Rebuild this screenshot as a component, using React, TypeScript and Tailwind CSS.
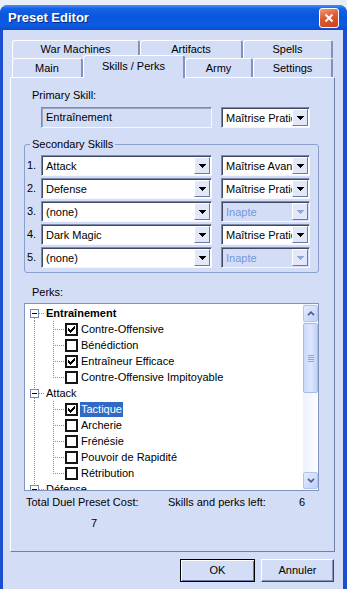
import clsx from 'clsx'

const CHECK = ['......X', '.....XX', 'X...XXX', 'XX.XXX.', 'XXXXX..', '.XXX...', '..X....']

const Arrow = ({ color }: { color: string }) => (
  <svg width="7" height="4" viewBox="0 0 7 4" shapeRendering="crispEdges">
    <rect x="0" y="0" width="7" height="1" fill={color} />
    <rect x="1" y="1" width="5" height="1" fill={color} />
    <rect x="2" y="2" width="3" height="1" fill={color} />
    <rect x="3" y="3" width="1" height="1" fill={color} />
  </svg>
)

const Combo = ({ value, width, disabled }: { value: string; width: string; disabled?: boolean }) => (
  <div
    className={clsx(
      'flex h-[21px] border border-t-[#7d8aac] border-l-[#7d8aac] border-r-[#f6f8ff] border-b-[#f6f8ff] shadow-[inset_1px_1px_0_#3f4966]',
      width,
      disabled ? 'bg-[#d4ddf6] text-[#7596dc]' : 'bg-white text-black'
    )}
  >
    <span className="min-w-0 flex-1 overflow-hidden whitespace-nowrap pl-[4px] pt-[1px] leading-[18px]">{value}</span>
    <div className="my-[1px] mr-[1px] flex w-[16px] items-center justify-center border border-t-white border-l-white border-r-[#6b79a0] border-b-[#6b79a0] bg-[#e2e8f8]">
      <Arrow color={disabled ? '#8ca6e2' : '#000'} />
    </div>
  </div>
)

const Tab = ({ label, width, active }: { label: string; width: string; active?: boolean }) => (
  <div
    className={clsx(
      'flex items-center justify-center rounded-t-[3px] border-l border-t border-r-2 border-l-white border-t-white border-r-[#8492b8] bg-[#d4ddf6]',
      width,
      active ? 'relative z-10 -mt-[3px] h-[23px] pb-[1px]' : 'h-full'
    )}
  >
    {label}
  </div>
)

const DOT = { stroke: '#8a8f9c', strokeDasharray: '1 1' }

type Row =
  | { kind: 'root'; label: string; bold?: boolean; first?: boolean }
  | { kind: 'child'; label: string; checked?: boolean; last?: boolean; selected?: boolean }

const rows: Row[] = [
  { kind: 'root', label: 'Entraînement', bold: true, first: true },
  { kind: 'child', label: 'Contre-Offensive', checked: true },
  { kind: 'child', label: 'Bénédiction' },
  { kind: 'child', label: 'Entraîneur Efficace', checked: true },
  { kind: 'child', label: 'Contre-Offensive Impitoyable', last: true },
  { kind: 'root', label: 'Attack' },
  { kind: 'child', label: 'Tactique', checked: true, selected: true },
  { kind: 'child', label: 'Archerie' },
  { kind: 'child', label: 'Frénésie' },
  { kind: 'child', label: 'Pouvoir de Rapidité' },
  { kind: 'child', label: 'Rétribution', last: true },
  { kind: 'root', label: 'Défense' },
]

const CheckBox = ({ checked }: { checked?: boolean }) => (
  <div className="flex h-[13px] w-[13px] shrink-0 items-center justify-center border-2 border-[#151515] bg-white">
    {checked && (
      <svg width="7" height="7" viewBox="0 0 7 7" shapeRendering="crispEdges">
        {CHECK.map((line, y) =>
          line.split('').map((c, x) => (c === 'X' ? <rect key={`${x}-${y}`} x={x} y={y} width="1" height="1" fill="#000" /> : null))
        )}
      </svg>
    )}
  </div>
)

const TreeRow = ({ row }: { row: Row }) => {
  if (row.kind === 'root') {
    return (
      <div className="flex h-[16px] items-center">
        <svg width="20" height="16" shapeRendering="crispEdges" className="shrink-0">
          {!row.first && <line x1="9.5" y1="0" x2="9.5" y2="4" {...DOT} />}
          <line x1="9.5" y1="13" x2="9.5" y2="16" {...DOT} />
          <line x1="14" y1="8.5" x2="20" y2="8.5" {...DOT} />
          <rect x="5.5" y="4.5" width="8" height="8" fill="#fff" stroke="#7489b4" />
          <line x1="7" y1="8.5" x2="12" y2="8.5" stroke="#000" />
        </svg>
        <span className={clsx('whitespace-nowrap px-[1px] leading-[16px]', row.bold && 'font-bold')}>{row.label}</span>
      </div>
    )
  }
  return (
    <div className="flex h-[16px] items-center">
      <svg width="40" height="16" shapeRendering="crispEdges" className="shrink-0">
        <line x1="9.5" y1="0" x2="9.5" y2="16" {...DOT} />
        <line x1="28.5" y1="0" x2="28.5" y2={row.last ? 9 : 16} {...DOT} />
        <line x1="30" y1="8.5" x2="40" y2="8.5" {...DOT} />
      </svg>
      <CheckBox checked={row.checked} />
      <span
        className={clsx(
          'ml-[2px] whitespace-nowrap px-[1px] leading-[15px]',
          row.selected && 'bg-[#316ac5] text-white'
        )}
      >
        {row.label}
      </span>
    </div>
  )
}

const ScrollBtn = ({ up }: { up?: boolean }) => (
  <div className="flex h-[17px] items-center justify-center rounded-[2px] border border-[#b3c5ee] bg-[linear-gradient(135deg,#e4ecfe,#bfd1f8)]">
    <svg width="8" height="5" viewBox="0 0 8 5">
      <path d={up ? 'M1 4.2L4 1.2L7 4.2' : 'M1 0.8L4 3.8L7 0.8'} fill="none" stroke="#4d6185" strokeWidth="1.7" />
    </svg>
  </div>
)

const Button = ({ label, isDefault, width }: { label: string; isDefault?: boolean; width: string }) => (
  <div
    className={clsx(
      'flex h-[23px] items-center justify-center',
      width,
      isDefault
        ? 'border border-black shadow-[inset_1px_1px_0_#ffffff,inset_-1px_-1px_0_#6d7ca3]'
        : 'border border-t-white border-l-white border-r-[#3f4966] border-b-[#3f4966] shadow-[inset_-1px_-1px_0_#8694b8]'
    )}
  >
    {label}
  </div>
)

export default function App() {
  return (
    <div className="h-[589px] w-[347px] overflow-hidden bg-[#e8eef7] font-['Liberation_Sans',Arial,sans-serif] text-[11px] text-black">
      <div className="h-[5px]" />
      <div className="flex h-[584px] flex-col overflow-hidden rounded-t-[8px] bg-[#1b4fcf]">
        {/* title bar */}
        <div className="flex h-[25px] items-center bg-[linear-gradient(180deg,#4a92f4_0%,#1663e6_14%,#0a56dc_45%,#0c5be4_80%,#0b4ccc_100%)] pl-[8px] pr-[8px]">
          <span className="text-[13px] font-bold text-white [text-shadow:1px_1px_0_#0b2a80]">Preset Editor</span>
          <div className="ml-auto flex h-[20px] w-[20px] items-center justify-center rounded-[3px] border border-white bg-[linear-gradient(160deg,#f39a76,#de5a31_45%,#c8441c)]">
            <svg width="10" height="10" viewBox="0 0 10 10">
              <path d="M1.5 1.5L8.5 8.5M8.5 1.5L1.5 8.5" stroke="#fff" strokeWidth="2" />
            </svg>
          </div>
        </div>

        {/* body */}
        <div className="flex flex-1 flex-col border-l-[3px] border-r-[4px] border-l-[#1b4fcf] border-r-[#1b4fcf] bg-[#d4ddf6] pl-[7px] pr-[8px] pt-[10px]">
          <div className="ml-[2px] flex flex-col">
            <div className="flex h-[18px]">
              <Tab label="War Machines" width="w-[128px]" />
              <Tab label="Artifacts" width="w-[103px]" />
              <Tab label="Spells" width="w-[90px]" />
            </div>
            <div className="flex h-[19px]">
              <Tab label="Main" width="w-[71px]" />
              <Tab label="Skills / Perks" width="w-[102px]" active />
              <Tab label="Army" width="w-[68px]" />
              <Tab label="Settings" width="w-[80px]" />
            </div>
          </div>

          {/* tab panel */}
          <div className="flex h-[475px] w-[325px] flex-col border border-t-white border-l-white border-r-[#6f80ab] border-b-[#6f80ab] pl-[13px] pt-[11px]">
            <div className="ml-[8px] h-[13px] leading-[13px]">Primary Skill:</div>
            <div className="ml-[17px] mt-[5px] flex gap-[9px]">
              <div className="flex h-[21px] w-[171px] items-center border border-t-[#7d8aac] border-l-[#7d8aac] border-r-[#f6f8ff] border-b-[#f6f8ff] pl-[4px] shadow-[inset_1px_1px_0_#9aa6c4]">
                Entraînement
              </div>
              <Combo value="Maîtrise Pratique" width="w-[89px]" />
            </div>

            <fieldset className="mt-[10px] w-[295px] rounded-[3px] border border-[#8a9fcd] px-[2px] pb-[4px] pt-[4px]">
              <legend className="ml-[3px] h-[13px] px-[2px] leading-[13px]">Secondary Skills</legend>
              <div className="flex flex-col gap-[2px]">
                {[
                  ['1.', 'Attack', 'Maîtrise Avancée', false],
                  ['2.', 'Defense', 'Maîtrise Pratique', false],
                  ['3.', '(none)', 'Inapte', true],
                  ['4.', 'Dark Magic', 'Maîtrise Pratique', false],
                  ['5.', '(none)', 'Inapte', true],
                ].map(([n, skill, level, dis]) => (
                  <div key={n as string} className="flex items-center">
                    <span className="w-[14px]">{n}</span>
                    <Combo value={skill as string} width="w-[171px]" />
                    <div className="ml-[9px]">
                      <Combo value={level as string} width="w-[89px]" disabled={dis as boolean} />
                    </div>
                  </div>
                ))}
              </div>
            </fieldset>

            <div className="ml-[8px] mt-[13px] h-[13px] leading-[13px]">Perks:</div>
            <div className="mt-[4px] flex h-[188px] w-[295px] border border-[#7f95bd] bg-white">
              <div className="min-w-0 flex-1 overflow-hidden pt-[1px]">
                {rows.map((r) => (
                  <TreeRow key={r.label} row={r} />
                ))}
              </div>
              <div className="flex w-[15px] flex-col bg-[linear-gradient(90deg,#eef2fc,#fbfcff)] pt-[1px] pb-[1px]">
                <ScrollBtn up />
                <div className="mt-[1px] flex h-[70px] flex-col items-center justify-center gap-[1px] rounded-[2px] border border-[#a8bbe6] bg-[linear-gradient(90deg,#c9d9fb,#dde7fd_50%,#c3d3f8)]">
                  <div className="h-[1px] w-[6px] bg-[#8ea5d6]" />
                  <div className="h-[1px] w-[6px] bg-[#8ea5d6]" />
                  <div className="h-[1px] w-[6px] bg-[#8ea5d6]" />
                  <div className="h-[1px] w-[6px] bg-[#8ea5d6]" />
                </div>
                <div className="flex-1" />
                <ScrollBtn />
              </div>
            </div>

            <div className="ml-[2px] mt-[5px] flex h-[13px] leading-[13px]">
              <span className="w-[142px]">Total Duel Preset Cost:</span>
              <span className="w-[131px]">Skills and perks left:</span>
              <span>6</span>
            </div>
            <div className="ml-[67px] mt-[8px] h-[13px] leading-[13px]">7</div>
          </div>

          <div className="mt-[7px] flex justify-end gap-[6px] pr-[1px]">
            <Button label="OK" width="w-[75px]" isDefault />
            <Button label="Annuler" width="w-[73px]" />
          </div>
        </div>
      </div>
    </div>
  )
}
